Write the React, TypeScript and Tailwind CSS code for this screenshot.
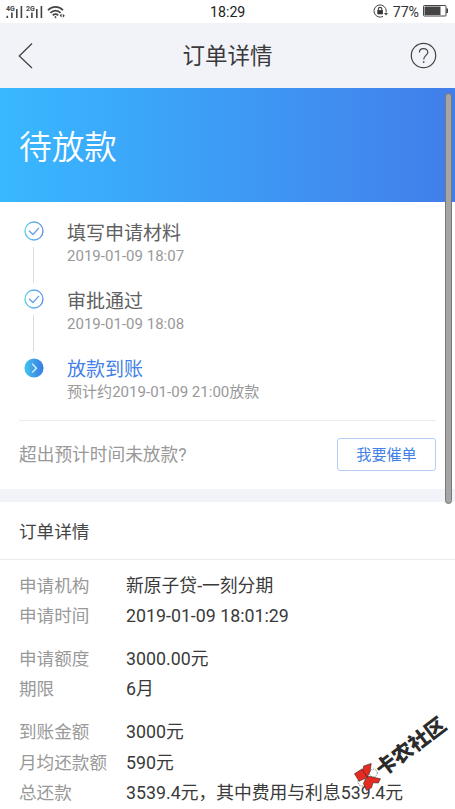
interface Step {
  title: string;
  time: string;
  active?: boolean;
}

const steps: Step[] = [
  { title: "填写申请材料", time: "2019-01-09 18:07" },
  { title: "审批通过", time: "2019-01-09 18:08" },
  { title: "放款到账", time: "预计约2019-01-09 21:00放款", active: true },
];

const groups = [
  [
    { label: "申请机构", value: "新原子贷-一刻分期" },
    { label: "申请时间", value: "2019-01-09 18:01:29" },
  ],
  [
    { label: "申请额度", value: "3000.00元" },
    { label: "期限", value: "6月" },
  ],
  [
    { label: "到账金额", value: "3000元" },
    { label: "月均还款额", value: "590元" },
    { label: "总还款", value: "3539.4元，其中费用与利息539.4元" },
  ],
];

function Signal({ label }: { label: string }) {
  return (
    <svg width="17" height="14" viewBox="0 0 17 14" fill="#444">
      <text x="0" y="5.6" fontSize="7" fontWeight="700" fontFamily="Roboto, sans-serif">
        {label}
      </text>
      <rect x="0.5" y="10.8" width="1.6" height="2.2" />
      <rect x="5.1" y="7.5" width="1.6" height="5.5" />
      <rect x="10" y="4" width="1.6" height="9" />
      <rect x="14.6" y="1" width="1.6" height="12" />
    </svg>
  );
}

function StatusBar() {
  return (
    <div className="relative flex h-[23px] items-center justify-between bg-white pr-[6px] pl-[6px]">
      <div className="flex items-center gap-[3px]">
        <Signal label="4G" />
        <Signal label="2G" />
        <svg className="ml-px" width="20" height="14" viewBox="0 0 20 14" fill="none" stroke="#444" strokeWidth="1.7">
          <path d="M1 5.2C5 .8 12 .8 16 5.2M3.4 7.8c2.8-3 7.4-3 10.2 0M5.8 10.3c1.5-1.6 3.9-1.6 5.4 0" />
          <circle cx="8.5" cy="12.1" r="0.6" fill="#444" strokeWidth="1" />
          <path d="M14.6 8.5v4l-2-2zM15.8 8.8v4l2-2z" fill="#444" stroke="none" />
        </svg>
      </div>
      <span className="absolute top-[5px] left-[210px] text-[14.2px] leading-none text-[#222]">18:29</span>
      <div className="flex items-center">
        <svg width="16" height="14" viewBox="0 0 16 14" fill="none" stroke="#444" strokeWidth="1">
          <path d="M13.2 8.5V7A6.1 6.1 0 1 0 10 12.4" />
          <path d="M11 9.1h4l-2 2.4z" fill="#444" stroke="none" />
          <rect x="4.3" y="6.1" width="5.6" height="4.2" fill="#333" stroke="none" />
          <path d="M5.4 6.5V5a1.7 1.7 0 0 1 3.4 0v1.5" strokeWidth="1.2" />
        </svg>
        <span className="ml-[4px] pt-[2px] text-[14.2px] leading-none text-[#333]">77%</span>
        <svg className="ml-[4px]" width="26" height="12" viewBox="0 0 26 12">
          <rect x="0.5" y="0.5" width="22.5" height="10.5" rx="0.8" fill="#fff" stroke="#444" />
          <rect x="1.5" y="1.5" width="16" height="8.5" fill="#444" />
          <rect x="23.3" y="3.5" width="1.7" height="4.5" fill="#444" />
        </svg>
      </div>
    </div>
  );
}

function StepIcon({ active }: { active?: boolean }) {
  return (
    <svg className="shrink-0" width="20" height="20" viewBox="0 0 20 20" fill="none">
      <defs>
        <linearGradient id="ring" x1="0" y1="0" x2="1" y2="0">
          <stop offset="0" stopColor="#58cdea" />
          <stop offset="1" stopColor="#5b8fea" />
        </linearGradient>
        <linearGradient id="disc" x1="0" y1="0" x2="1" y2="0">
          <stop offset="0" stopColor="#42c6ea" />
          <stop offset="1" stopColor="#3a78e6" />
        </linearGradient>
      </defs>
      {active ? (
        <>
          <circle cx="10" cy="10" r="9.6" fill="url(#disc)" />
          <path d="M8.2 5.8l4.2 4.4-4.2 4.4" stroke="#d8edff" strokeWidth="1.4" />
        </>
      ) : (
        <>
          <circle cx="10" cy="10" r="9" stroke="url(#ring)" strokeWidth="1.3" />
          <path d="M5 9.8l4 3.7 6-6.6" stroke="#62a0ec" strokeWidth="1.3" />
        </>
      )}
    </svg>
  );
}

function Timeline() {
  return (
    <div className="h-[217.5px] pt-[19px]">
      {steps.map((step, i) => (
        <div key={step.title} className="flex h-[68.3px] pl-[23.5px]">
          <div className="flex w-5 flex-col items-center">
            <StepIcon active={step.active} />
            {i < steps.length - 1 && <div className="mt-[6px] h-[36px] w-px bg-[#dcdcdc]" />}
          </div>
          <div className="ml-[23.5px] pt-[1.7px]">
            <p className={step.active ? "text-[19px] leading-[22px] text-[#4381e6]" : "text-[19px] leading-[22px] text-[#606060]"}>
              {step.title}
            </p>
            <p className="text-[15.05px] leading-[22px] text-[#999]">{step.time}</p>
          </div>
        </div>
      ))}
    </div>
  );
}

function Watermark() {
  return (
    <>
      <svg className="absolute top-[762px] left-[353px]" width="30" height="30" viewBox="0 0 84 84">
        <g stroke="#222" strokeWidth="1.5">
          <circle cx="25" cy="56" r="11" fill="#fff" strokeDasharray="4 3" />
          <circle cx="57" cy="31" r="11" fill="#fff" strokeDasharray="4 3" />
          <path d="M4 33L26 19L42 42L17 54Z" fill="#e32b22" />
          <path d="M30 11L51 4L48 26L40 42L28 25Z" fill="#e32b22" />
          <path d="M36 46L44 40L77 47L71 59L56 58L52 72L38 80L29 60Z" fill="#e32b22" />
        </g>
      </svg>
      <div className="absolute top-[734px] left-[370px] flex h-[26px] w-[82px] -rotate-37 items-center">
        <span className="text-[20.5px] leading-[26px] font-black whitespace-nowrap text-[#2b2b2b]">卡农社区</span>
      </div>
    </>
  );
}

export default function App() {
  return (
    <div className="relative h-[809px] w-[455px] overflow-hidden bg-white font-[Roboto,'Noto_Sans_CJK_SC',sans-serif]">
      <StatusBar />

      <header className="flex h-[65px] items-center justify-between bg-[#f2f3f8] pr-[18px] pl-[18px]">
        <svg width="27" height="27" viewBox="0 0 27 27" fill="none" stroke="#444" strokeWidth="1.3">
          <path d="M14 1.5L1.3 14 14 26" />
        </svg>
        <h1 className="pt-[2px] text-[22.5px] text-[#3a3a3a]">订单详情</h1>
        <svg width="27" height="27" viewBox="0 0 27 27" fill="none" stroke="#444" strokeWidth="1.2">
          <circle cx="13.5" cy="13.5" r="12.2" />
          <path d="M9.4 10.4c0-5 8.4-5 8.4-.2 0 3.1-4.1 3.3-4.1 7.2" />
          <circle cx="13.7" cy="20" r="0.6" fill="#444" strokeWidth="0.7" />
        </svg>
      </header>

      <section className="flex h-[114px] items-center bg-linear-to-r from-[#38b8ff] to-[#417eea] pl-[19px]">
        <h2 className="font-['Noto_Sans_CJK_SC',sans-serif] text-[32.7px] leading-none font-[350] text-white">待放款</h2>
      </section>

      <Timeline />

      <div className="mx-[19px] flex h-[69.5px] items-center justify-between border-t border-[#ebebeb]">
        <span className="pt-[2px] text-[17.7px] text-[#999]">超出预计时间未放款?</span>
        <button className="h-[33px] w-[99px] rounded-[3px] border border-[#b3cdf5] pt-[2px] text-[15.1px] text-[#4381e6]">
          我要催单
        </button>
      </div>

      <div className="h-[13px] bg-[#f2f3f8]" />

      <h3 className="flex h-[58px] items-center border-b border-[#ebebeb] pt-[3px] pl-[19px] text-[17.6px] text-[#444]">
        订单详情
      </h3>

      <dl className="flex flex-col gap-[12.8px] pt-[10.5px] pl-[19px] text-[17.6px] leading-[30.3px]">
        {groups.map((rows, i) => (
          <div key={i}>
            {rows.map((row) => (
              <div key={row.label} className="flex whitespace-nowrap">
                <dt className="w-[107px] text-[#999]">{row.label}</dt>
                <dd className="text-[17.8px] text-[#3a3a3a]">{row.value}</dd>
              </div>
            ))}
          </div>
        ))}
      </dl>

      <div className="absolute top-[93px] right-[3px] h-[411px] w-[7px] rounded-full border border-[#777] bg-[#a5a5a5]" />
      <Watermark />
    </div>
  );
}
